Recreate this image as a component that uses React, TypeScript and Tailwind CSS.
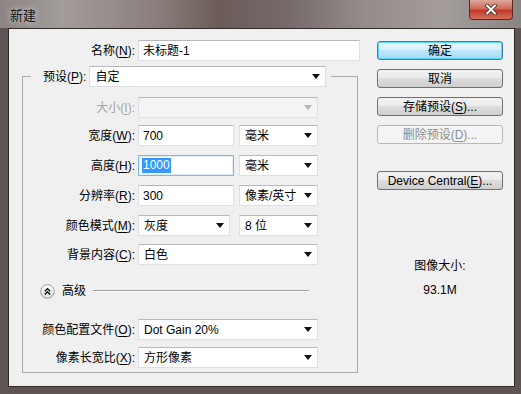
import React from "react";

const Arrow = ({ disabled }: { disabled?: boolean }) => (
  <svg width="8" height="5" viewBox="0 0 8 5" className="shrink-0">
    <path d="M0 0h8L4 5z" fill={disabled ? "#b4b4b4" : "#111"} />
  </svg>
);

const Key = ({ text, k }: { text: string; k: string }) => (
  <>
    {text}(<span className="underline underline-offset-2">{k}</span>):
  </>
);

const Select = ({
  value,
  className,
  disabled,
}: {
  value?: string;
  className: string;
  disabled?: boolean;
}) => (
  <div
    className={`h-[21px] shrink-0 flex items-center justify-between pl-[5px] pr-[5px] border border-[#dcdfe4] border-t-[#b5b8bd] ${
      disabled ? "bg-[#f4f4f4]" : "bg-white"
    } ${className}`}
  >
    <span className="truncate">{value}</span>
    <Arrow disabled={disabled} />
  </div>
);

const Input = ({
  value,
  className,
  focused,
}: {
  value: string;
  className: string;
  focused?: boolean;
}) => (
  <div
    className={`h-[21px] shrink-0 flex items-center pl-[3px] bg-white border ${
      focused
        ? "border-[#7eb4ea] shadow-[inset_0_0_0_1px_#e2f0fc]"
        : "border-[#dcdfe4] border-t-[#b5b8bd]"
    } ${className}`}
  >
    {focused ? (
      <span className="bg-[#3399ff] text-white px-px leading-[15px]">{value}</span>
    ) : (
      <span className="pl-px">{value}</span>
    )}
  </div>
);

const Row = ({
  text,
  k,
  disabled,
  className,
  children,
}: {
  text: string;
  k: string;
  disabled?: boolean;
  className: string;
  children: React.ReactNode;
}) => (
  <div className={`flex items-center h-[21px] ${className}`}>
    <span className={`w-[112px] shrink-0 text-right ${disabled ? "text-[#a3a3a3]" : "text-black"}`}>
      <Key text={text} k={k} />
    </span>
    <div className="ml-[3px] flex gap-[5px]">{children}</div>
  </div>
);

const Button = ({
  children,
  primary,
  disabled,
  className = "",
}: {
  children: React.ReactNode;
  primary?: boolean;
  disabled?: boolean;
  className?: string;
}) => (
  <div
    className={`w-[126px] h-[19px] rounded-[3px] flex items-center justify-center border ${
      disabled
        ? "border-[#b5b9bc] bg-[#f4f4f4] text-[#8d8d8d]"
        : primary
        ? "border-[#3c7fb1] shadow-[inset_0_0_0_1px_#58d4f7] bg-[linear-gradient(#eaf6fd_0%,#d9f0fc_45%,#bee6fd_50%,#a7d9f5_100%)] text-black"
        : "border-[#707070] bg-[linear-gradient(#f2f2f2_0%,#ebebeb_45%,#dddddd_50%,#cfcfcf_100%)] text-black"
    } ${className}`}
  >
    {children}
  </div>
);

export default function App() {
  return (
    <div className="w-[521px] h-[394px] flex flex-col bg-[#5d5453] font-['Liberation_Sans','Noto_Sans_CJK_SC',sans-serif] text-[12px] text-black overflow-hidden">
      <div className="h-[28px] shrink-0 flex items-start justify-between bg-[linear-gradient(90deg,#8b8483_0%,#a29c9b_12%,#8a7f7d_30%,#6b5c59_42%,#75696a_55%,#948c8b_70%,#a39d9c_85%,#8a8483_100%)]">
        <span className="ml-[10px] mt-[6px] text-[13px] text-[#111] [text-shadow:0_0_6px_rgba(255,255,255,0.8)]">
          新建
        </span>
        <div className="mr-[8px] w-[44px] h-[20px] rounded-b-[4px] border border-t-0 border-[#5a2a22] bg-[linear-gradient(#dca89c_0%,#cf6b5a_45%,#c0392a_55%,#d2715c_100%)] flex items-center justify-center">
          <svg width="12" height="11" viewBox="0 0 12 11">
            <path d="M2 1.5l8 8M10 1.5l-8 8" stroke="#4a2a26" strokeWidth="3.6" strokeLinecap="round" />
            <path d="M2 1.5l8 8M10 1.5l-8 8" stroke="#fff" strokeWidth="2" strokeLinecap="round" />
          </svg>
        </div>
      </div>

      <div className="flex-1 ml-[8px] mr-[6px] mb-[7px] border border-[#2f2a29] bg-[#f0f0f0] flex">
        <div className="w-[349px] shrink-0 pl-[13px] flex flex-col">
          <div className="mt-[11px] flex items-center h-[21px]">
            <span className="w-[113px] shrink-0 text-right">
              <Key text="名称" k="N" />
            </span>
            <Input value="未标题-1" className="ml-[3px] w-[222px]" />
          </div>

          <fieldset className="mt-[5px] w-[336px] border border-[#a9a9a9] pb-[4px]">
            <legend className="ml-[8px] pl-[12px] pr-[5px]">
              <div className="flex items-center">
                <span>
                  <Key text="预设" k="P" />
                </span>
                <Select value="自定" className="ml-[3px] w-[237px]" />
              </div>
            </legend>

            <Row text="大小" k="I" disabled className="mt-[10px]">
              <Select disabled className="w-[180px]" />
            </Row>
            <Row text="宽度" k="W" className="mt-[7px]">
              <Input value="700" className="w-[96px]" />
              <Select value="毫米" className="w-[79px]" />
            </Row>
            <Row text="高度" k="H" className="mt-[9px]">
              <Input value="1000" focused className="w-[96px]" />
              <Select value="毫米" className="w-[79px]" />
            </Row>
            <Row text="分辨率" k="R" className="mt-[9px]">
              <Input value="300" className="w-[96px]" />
              <Select value="像素/英寸" className="w-[79px]" />
            </Row>
            <Row text="颜色模式" k="M" className="mt-[9px]">
              <Select value="灰度" className="w-[92px]" />
              <Select value="8 位" className="ml-[4px] w-[79px]" />
            </Row>
            <Row text="背景内容" k="C" className="mt-[8px]">
              <Select value="白色" className="w-[180px]" />
            </Row>

            <div className="mt-[19px] h-[14px] flex items-center">
              <svg width="15" height="15" viewBox="0 0 15 15" className="ml-[17px]">
                <defs>
                  <linearGradient id="cg" x1="0" y1="0" x2="0" y2="1">
                    <stop offset="0" stopColor="#ffffff" />
                    <stop offset="1" stopColor="#dcdcdc" />
                  </linearGradient>
                </defs>
                <circle cx="7.5" cy="7.5" r="6.8" fill="url(#cg)" stroke="#9a9a9a" strokeWidth="1" />
                <path d="M4.8 7.2L7.5 4.6L10.2 7.2M4.8 10.4L7.5 7.8L10.2 10.4" fill="none" stroke="#111" strokeWidth="1.4" />
              </svg>
              <span className="ml-[7px]">高级</span>
              <div className="ml-[7px] w-[216px] border-t border-[#a0a0a0] border-b border-b-white" />
            </div>

            <Row text="颜色配置文件" k="O" className="mt-[21px]">
              <Select value="Dot Gain 20%" className="w-[180px]" />
            </Row>
            <Row text="像素长宽比" k="X" className="mt-[7px]">
              <Select value="方形像素" className="w-[180px]" />
            </Row>
          </fieldset>
        </div>

        <div className="ml-[19px] flex flex-col">
          <Button primary className="mt-[12px]">确定</Button>
          <Button className="mt-[9px]">取消</Button>
          <Button className="mt-[9px]">
            <span>
              存储预设(<span className="underline underline-offset-2">S</span>)...
            </span>
          </Button>
          <Button disabled className="mt-[9px]">
            <span>
              删除预设(<span className="underline underline-offset-2">D</span>)...
            </span>
          </Button>
          <Button className="mt-[27px]">
            <span>
              Device Central(<span className="underline underline-offset-2">E</span>)...
            </span>
          </Button>
          <div className="mt-[67px] w-[126px] flex flex-col items-center gap-[6px]">
            <span>图像大小:</span>
            <span>93.1M</span>
          </div>
        </div>
      </div>
    </div>
  );
}
